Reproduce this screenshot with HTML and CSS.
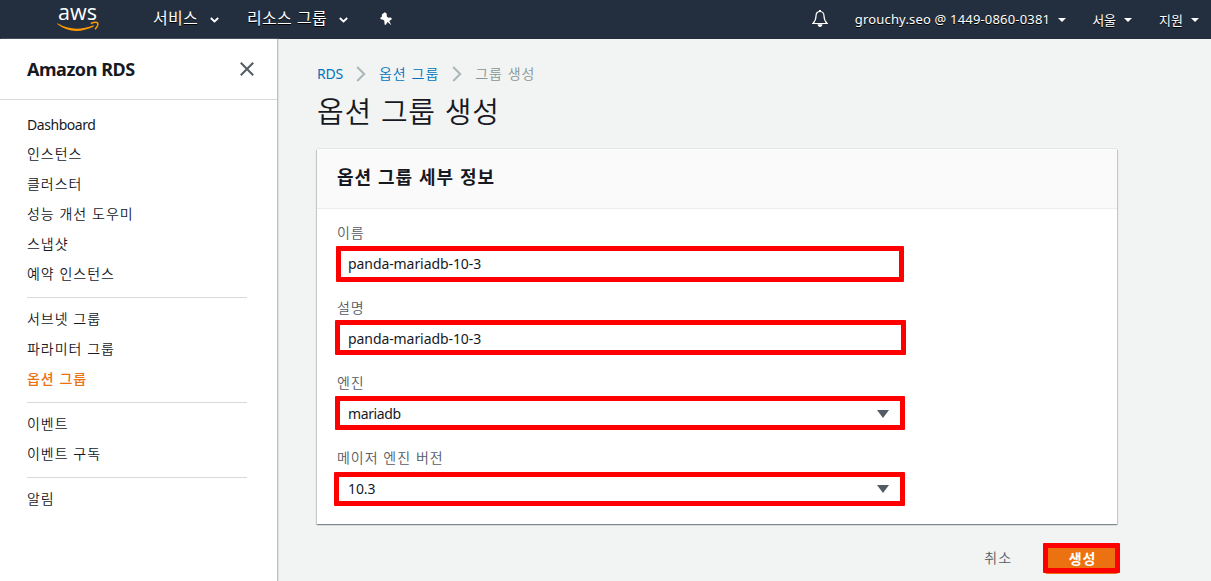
FILE: index.html
```html
<!DOCTYPE html>
<html lang="ko">
<head>
<meta charset="utf-8">
<title>옵션 그룹 생성</title>
<link rel="stylesheet" href="styles.css">
</head>
<body>
<header class="topbar">
  <svg class="logo" width="44" height="34" viewBox="0 -6 44 34">
    <text class="logo-text" x="1" y="13.500" textLength="39" lengthAdjust="spacingAndGlyphs">aws</text>
    <path d="M.5 17.200Q17 27 36.500 19.200L36.800 20.400Q16 30.500 .2 17.900z" fill="#f90"/>
    <path d="M33.800 17.500C37 16.200 40 16.200 40.600 16.900C41.200 18.200 40 21.200 38 23.200" fill="none" stroke="#f90" stroke-width="1.500"/>
  </svg>
  <nav class="menus">
    <span class="menu"><span class="menu-label">서비스</span><svg class="chev" width="9" height="6" viewBox="0 0 9 6"><path d="M.8 1l3.700 3.500L8.200 1"/></svg></span>
    <span class="menu"><span class="menu-label">리소스 그룹</span><svg class="chev" width="9" height="6" viewBox="0 0 9 6"><path d="M.8 1l3.700 3.500L8.200 1"/></svg></span>
    <svg class="pin" width="13" height="14" viewBox="0 0 13 14"><path fill="#fff" d="M4.800.3L6.600 1.600 6.900 4.600 8.300 5.800 10.800 5.600 12 7 9.300 9 11.300 13.200 7.600 10 5.600 13 4.600 12.500 4.300 8.800 3.200 7.700.8 7.300.2 5.900 2 4.500 1.800 2.500z"/></svg>
  </nav>
  <div class="account">
    <svg class="bell" width="16" height="18" viewBox="0 0 16 18"><path fill="none" stroke="#fff" stroke-width="1.200" d="M8 1.500C5.200 1.500 4 3.500 4 6C4 10 3 11.500.9 13.500H15.100C13 11.500 12 10 12 6C12 3.500 10.800 1.500 8 1.500z"/><path fill="#fff" d="M7 0h2v2H7zM5.500 14.300h5C10.200 16 9.300 17 8 17S5.800 16 5.500 14.300z"/></svg>
    <span class="user">grouchy.seo @ 1449-0860-0381</span><i class="caret"></i>
    <span class="region">서울</span><i class="caret"></i>
    <span class="support">지원</span><i class="caret"></i>
  </div>
</header>
<div class="body">
  <aside class="sidebar">
    <div class="side-head">
      <h2 class="service">Amazon RDS</h2>
      <svg width="14" height="14" viewBox="0 0 14 14"><path d="M.8.8l12.400 12.400M13.200.8L.8 13.200" stroke="#545b64" stroke-width="2"/></svg>
    </div>
    <ul class="group">
      <li class="latin">Dashboard</li><li>인스턴스</li><li>클러스터</li><li>성능 개선 도우미</li><li>스냅샷</li><li>예약 인스턴스</li>
    </ul>
    <ul class="group"><li>서브넷 그룹</li><li>파라미터 그룹</li><li class="active">옵션 그룹</li></ul>
    <ul class="group"><li>이벤트</li><li>이벤트 구독</li></ul>
    <ul class="group"><li>알림</li></ul>
  </aside>
  <main class="main">
    <nav class="crumbs">
      <a class="crumb-rds">RDS</a>
      <svg class="sep" width="10" height="16" viewBox="0 0 10 16"><path d="M1.200 1l7 7-7 7"/></svg>
      <a class="crumb">옵션 그룹</a>
      <svg class="sep" width="10" height="16" viewBox="0 0 10 16"><path d="M1.200 1l7 7-7 7"/></svg>
      <span class="crumb current">그룹 생성</span>
    </nav>
    <h1 class="title">옵션 그룹 생성</h1>
    <section class="card">
      <h2 class="card-head">옵션 그룹 세부 정보</h2>
      <div class="fields">
        <div class="field"><label>이름</label><div class="control"><span class="value">panda-mariadb-10-3</span><b class="mark mark-name"></b></div></div>
        <div class="field"><label>설명</label><div class="control"><span class="value">panda-mariadb-10-3</span><b class="mark mark-desc"></b></div></div>
        <div class="field"><label>엔진</label><div class="control"><span class="value value-engine">mariadb</span><i class="arrow"></i><b class="mark mark-engine"></b></div></div>
        <div class="field"><label>메이저 엔진 버전</label><div class="control"><span class="value">10.3</span><i class="arrow"></i><b class="mark mark-version"></b></div></div>
      </div>
    </section>
    <div class="actions">
      <span class="cancel">취소</span>
      <div class="create">생성<b class="mark mark-create"></b></div>
    </div>
  </main>
</div>
</body>
</html>
```
FILE: styles.css
```css
* { box-sizing: border-box; }
body {
  margin: 0;
  height: 581px;
  overflow: hidden;
  background: #f2f3f3;
  color: #16191f;
  font: 350 14px/27px "Noto Sans CJK KR DemiLight", "Noto Sans CJK KR", sans-serif;
  letter-spacing: .95px;
}
h1, h2, ul { margin: 0; padding: 0; }
ul { list-style: none; }
svg { display: block; flex: none; }

.topbar {
  display: flex;
  height: 39px;
  padding: 0 12px 0 57px;
  background: #232f3e;
  color: #fff;
  font-family: "Noto Sans CJK KR", sans-serif;
  font-weight: 400;
  letter-spacing: 0;
  text-shadow: 0 1px 0 #000;
}
.logo { overflow: visible; }
.logo-text { font: 500 22.5px "Open Sans", sans-serif; fill: #fff; text-shadow: none; }
.menus { display: flex; padding-left: 52px; height: 35px; align-items: center; }
.menu { display: flex; align-items: center; gap: 12px; margin-right: 28px; font-size: 16px; letter-spacing: .3px; }
.menu-label { padding-bottom: 1px; }
.chev { margin-top: 5px; }
.chev path { fill: none; stroke: #fff; stroke-width: 1.8; }
.pin { margin: 3px 0 0 4px; }
.account { display: flex; margin-left: auto; height: 38px; align-items: center; font-size: 13px; }
.bell { margin-right: 27px; }
.user { font-family: "Noto Sans", sans-serif; letter-spacing: .18px; }
.caret { margin: 2px 0 0 8px; border: 4px solid transparent; border-top-color: #fff; border-bottom: 0; }
.region { margin-left: 26px; }
.support { margin-left: 27px; }

.body { display: flex; height: 542px; }
.sidebar { width: 278px; border-right: 1px solid #b9c0c3; background: #fff; box-shadow: 1px 0 1px #e0e3e3; }
.side-head {
  display: flex;
  align-items: center;
  justify-content: space-between;
  height: 61px;
  margin-bottom: 10px;
  padding: 0 23px 0 27px;
  border-bottom: 1px solid #d5dbdb;
}
.service { font: 700 18px/30px "Noto Sans", sans-serif; letter-spacing: -.45px; }
.group { width: 220px; margin-left: 27px; }
.group li { height: 30px; }
.group + .group { margin-top: 7px; padding-top: 7px; border-top: 1px solid #d5dbdb; }
.group .latin { font: 14px/30px "Noto Sans", sans-serif; letter-spacing: -.45px; }
.active { color: #ec7211; font-family: "Noto Sans CJK KR", sans-serif; font-weight: 500; }

.main { width: 841px; padding: 25px 0 0 39px; }
.crumbs { display: flex; align-items: center; height: 20px; color: #0073bb; }
.crumb { padding-bottom: 1px; }
.crumb-rds { font: 14px/20px "Noto Sans", sans-serif; letter-spacing: -.2px; }
.sep { margin: 0 13px; }
.sep path { fill: none; stroke: #aab7b8; stroke-width: 2; }
.crumbs .current { color: #879596; }
.title { margin-top: 6px; height: 40px; font-size: 29px; line-height: 41px; font-weight: 350; letter-spacing: .8px; }
.card {
  width: 800px;
  height: 375px;
  margin-top: 19px;
  background: #fff;
  box-shadow: 0 1px 1px 0 rgba(0,28,36,.3), 1px 1px 1px 0 rgba(0,28,36,.15), -1px 1px 1px 0 rgba(0,28,36,.15), 0 -1px 0 0 #e4e7e7;
}
.card-head {
  height: 60px;
  padding-left: 20px;
  border-bottom: 1px solid #eaeded;
  background: #fafafa;
  font: 700 18px/54px "Noto Sans CJK KR", sans-serif;
}
.fields { display: grid; gap: 20px; padding: 15px 20px; }
.field { display: grid; gap: 5px; }
.field label { height: 20px; line-height: 17px; color: #545b64; }
.control {
  position: relative;
  display: flex;
  align-items: center;
  justify-content: space-between;
  width: 566px;
  height: 30px;
  padding: 0 14px 0 11px;
}
.value { font: 14px/30px "Noto Sans", sans-serif; letter-spacing: -.08px; }
.value-engine { letter-spacing: -.4px; }
.arrow { border: 6px solid transparent; border-top: 8px solid #545b64; border-bottom: 0; }
.mark { position: absolute; border: 5px solid #f00; border-radius: 1px; }
.mark-name { left: -1px; top: -3px; width: 568px; height: 36px; }
.mark-desc { left: -2px; top: -4px; width: 571px; height: 35px; }
.mark-engine { left: -2px; top: -3px; width: 570px; height: 34px; }
.mark-version { left: -3px; top: -2px; width: 571px; height: 34px; }
.actions { display: flex; justify-content: flex-end; gap: 33px; margin-top: 20px; }
.cancel { color: #545b64; }
.create {
  position: relative;
  width: 73px;
  height: 30px;
  margin-right: 1px;
  padding-left: 2px;
  border-radius: 2px;
  background: #ec7211;
  color: #fff;
  font: 700 14px/28px "Noto Sans CJK KR", sans-serif;
  text-align: center;
}
.mark-create { left: -2px; top: -1px; width: 77px; height: 30px; }
```
